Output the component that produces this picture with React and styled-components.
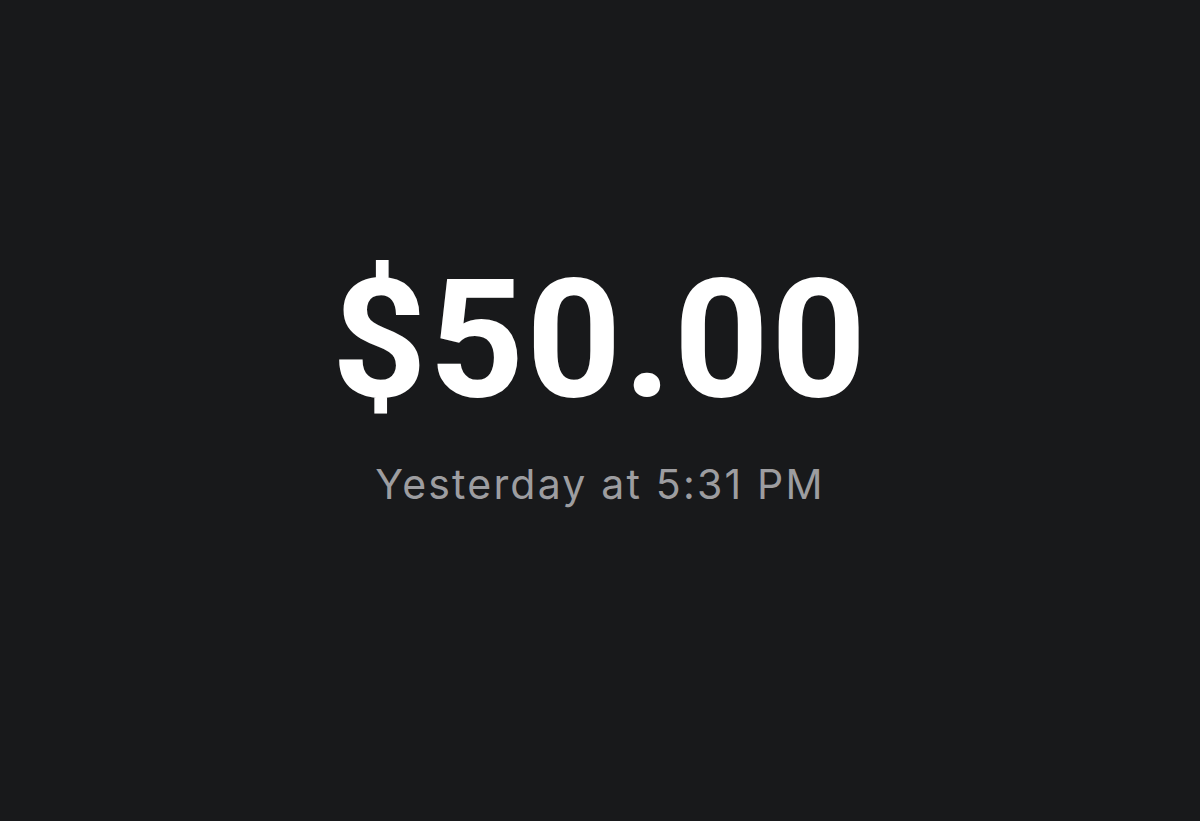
import React from "react";
import styled, { createGlobalStyle } from "styled-components";

const Global = createGlobalStyle`
  html, body { margin: 0; padding: 0; background: #18191b; }
  body { font-family: Inter, "Noto Sans", sans-serif; }
`;

const Page = styled.main`
  box-sizing: border-box;
  min-height: 821px;
  display: flex;
  flex-direction: column;
  align-items: center;
  padding-top: 257px;
  background: #18191b;
`;

const Amount = styled.div`
  font-family: Roboto, Inter, sans-serif;
  font-size: 166px;
  line-height: 1;
  font-weight: 700;
  color: #ffffff;
  letter-spacing: 2px;
`;

const Timestamp = styled.div`
  margin-top: 41px;
  font-size: 41px;
  line-height: 1;
  font-weight: 400;
  color: #9d9da0;
  letter-spacing: 2.2px;
`;

export default function App() {
  return (
    <>
      <Global />
      <Page>
        <Amount>$50.00</Amount>
        <Timestamp>Yesterday at 5:31 PM</Timestamp>
      </Page>
    </>
  );
}
